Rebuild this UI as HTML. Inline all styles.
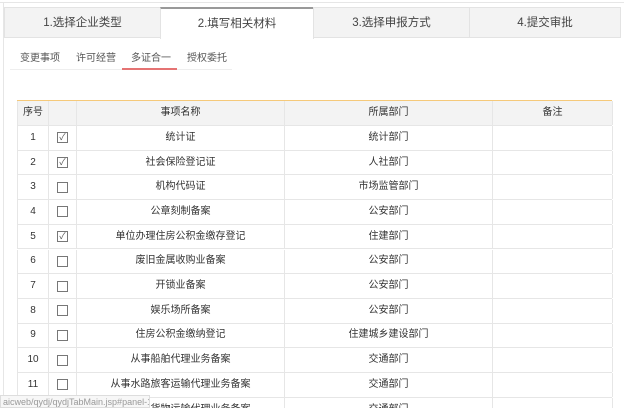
<!DOCTYPE html><html><head><meta charset="utf-8"><style>
html,body{margin:0;width:624px;height:408px;overflow:hidden;background:#fff;font-family:"Liberation Sans","Noto Sans CJK SC",sans-serif;color:#333;position:relative}
.a{position:absolute}
.tab{position:absolute;top:7px;height:31px;line-height:31px;text-align:center;font-size:11.5px;background:#f3f3f3;border:1px solid #e3e3e3;box-sizing:border-box;color:#444}
.st{position:absolute;top:49px;font-size:10px;color:#555}
.row{position:absolute;left:17px;width:595px;border-bottom:1px solid #e6e6e6;font-size:10px;box-sizing:border-box}
.row div{position:absolute;top:0;height:100%;text-align:center;border-right:1px solid #e6e6e6;box-sizing:border-box;display:flex;align-items:center;justify-content:center;line-height:12px}
.cb{display:inline-block;width:9px;height:9px;border:1px solid #777;font-size:9px;line-height:9px;color:#555;text-align:center}
</style></head><body>
<div class="a" style="left:0;top:2px;width:624px;height:1px;background:#e6e6e6"></div>
<div class="a" style="left:3px;top:2px;width:1px;height:406px;background:#e6e6e6"></div>
<div class="tab" style="left:4px;width:157px">1.选择企业类型</div>
<div class="tab" style="left:160px;width:154px;background:#fff;border-top:2px solid #999;border-bottom:none;height:32px">2.填写相关材料</div>
<div class="tab" style="left:313px;width:157px">3.选择申报方式</div>
<div class="tab" style="left:469px;width:152px">4.提交审批</div>
<div class="st" style="left:20px">变更事项</div>
<div class="st" style="left:76px">许可经营</div>
<div class="st" style="left:131px">多证合一</div>
<div class="st" style="left:187px">授权委托</div>
<div class="a" style="left:10px;top:69px;width:222px;height:1px;background:#eee"></div>
<div class="a" style="left:122px;top:68px;width:55px;height:2px;background:#e57373"></div>
<div class="a" style="left:17px;top:100px;width:595px;height:1px;background:#f5c97a"></div>
<div id="t"></div>
<div class="a" style="left:0;top:395px;width:150px;height:13px;background:#f7f7f7;border:1px solid #ddd;font-size:9px;color:#999;line-height:12px;padding-left:2px;box-sizing:border-box;white-space:nowrap;overflow:hidden">aicweb/qydj/qydjTabMain.jsp#panel-1_1</div>
<script>
var d=[["1",1,"统计证","统计部门"],["2",1,"社会保险登记证","人社部门"],["3",0,"机构代码证","市场监管部门"],["4",0,"公章刻制备案","公安部门"],["5",1,"单位办理住房公积金缴存登记","住建部门"],["6",0,"废旧金属收购业备案","公安部门"],["7",0,"开锁业备案","公安部门"],["8",0,"娱乐场所备案","公安部门"],["9",0,"住房公积金缴纳登记","住建城乡建设部门"],["10",0,"从事船舶代理业务备案","交通部门"],["11",0,"从事水路旅客运输代理业务备案","交通部门"],["12",0,"从事水路货物运输代理业务备案","交通部门"]];
var h='<div class="row" style="top:101px;height:25px;background:#f3f3f3;border-left:1px solid #e6e6e6"><div style="left:0;width:31px">序号</div><div style="left:31px;width:28px"></div><div style="left:59px;width:208px">事项名称</div><div style="left:267px;width:208px">所属部门</div><div style="left:475px;width:120px">备注</div></div>';
d.forEach(function(r,i){var t=126+i*24.7;h+='<div class="row" style="top:'+t+'px;height:24.7px;border-left:1px solid #e6e6e6"><div style="left:0;width:31px">'+r[0]+'</div><div style="left:31px;width:28px"><span class="cb">'+(r[1]?'✓':'')+'</span></div><div style="left:59px;width:208px">'+r[2]+'</div><div style="left:267px;width:208px">'+r[3]+'</div><div style="left:475px;width:120px"></div></div>';});
document.getElementById('t').innerHTML=h;
</script>
</body></html>
